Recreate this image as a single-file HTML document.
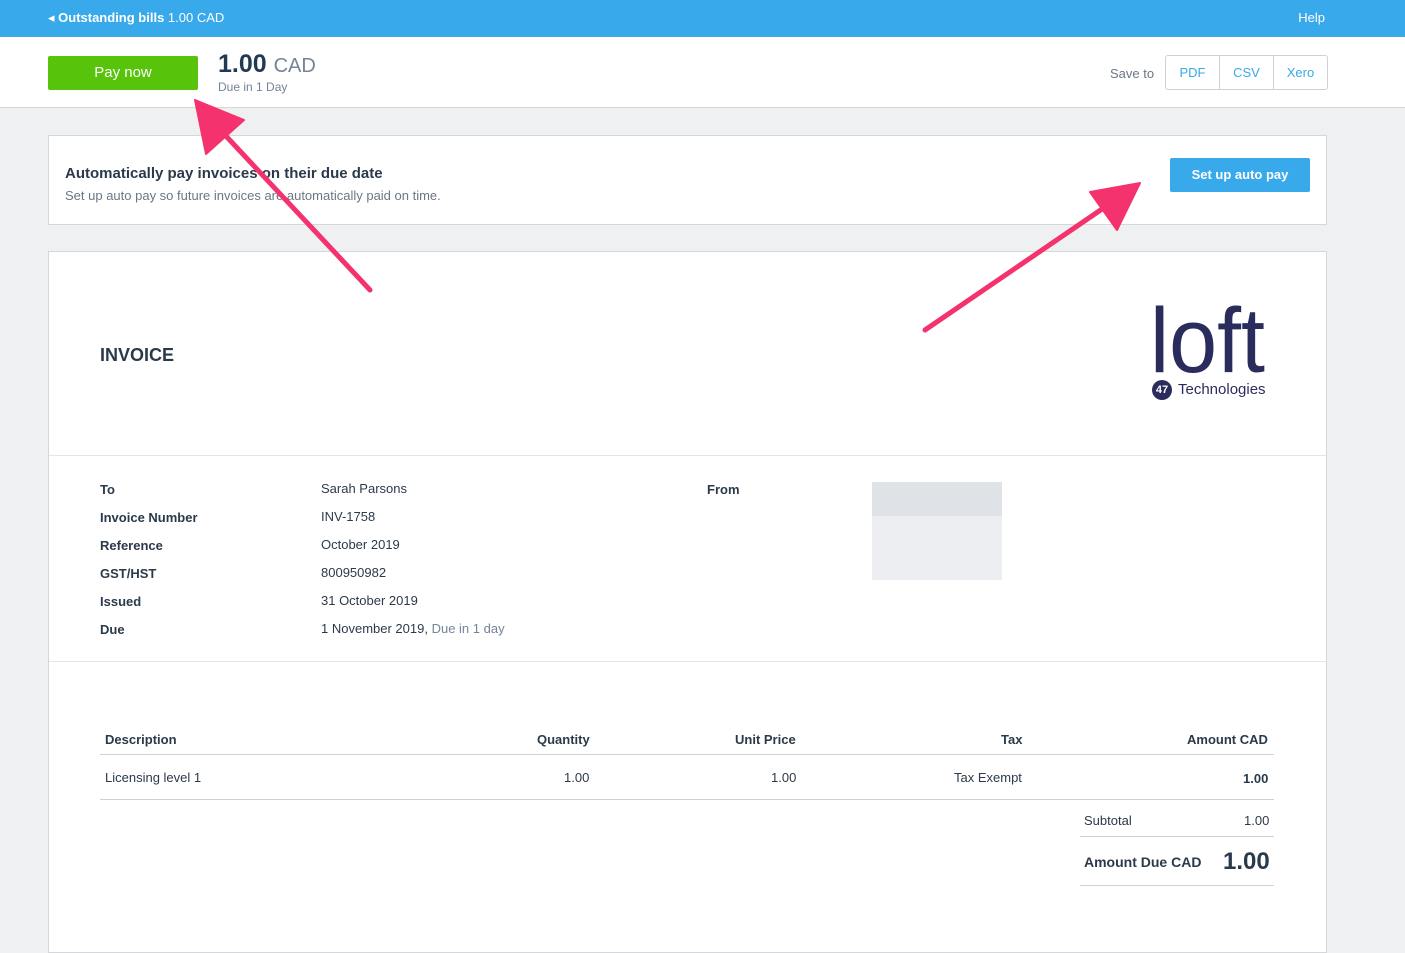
<!DOCTYPE html><html><head><style>
body{margin:0;width:1405px;height:888px;overflow:hidden;background:#eff0f2;font-family:"Liberation Sans",sans-serif;color:#2b3a4a;position:relative}
.top{height:37px;background:#38a9ea;color:#fff;font-size:13px;position:relative}
.top .l{position:absolute;left:48px;top:10px}
.top .r{position:absolute;right:80px;top:10px}
.hd{height:70px;background:#fff;border-bottom:1px solid #d4d8dc;position:relative}
.pay{position:absolute;left:48px;top:19px;width:150px;height:34px;background:#57c30a;border-radius:2px;color:#fff;font-size:15px;text-align:center;line-height:34px}
.amt{position:absolute;left:218px;top:13px;font-size:25px;font-weight:bold;color:#233a55}
.amt span{font-weight:normal;color:#74849a;font-size:20px}
.due{position:absolute;left:218px;top:43px;font-size:12px;color:#74849a}
.save{position:absolute;left:1110px;top:29px;font-size:13px;color:#6b7785}
.btns{position:absolute;left:1165px;top:18px;display:flex;border:1px solid #ccd2d8;border-radius:3px;height:33px}
.btns div{width:53px;text-align:center;line-height:33px;font-size:13px;color:#38a9ea;border-right:1px solid #ccd2d8}
.btns div:last-child{border:none}
.box{position:absolute;left:48px;width:1277px;background:#fff;border:1px solid #d4d8dc}
.ap{top:135px;height:88px}
.ap b{position:absolute;left:16px;top:29px;font-size:15px}
.ap p{position:absolute;left:16px;top:52px;margin:0;font-size:13px;color:#6b7785}
.ap .btn{position:absolute;left:1121px;top:22px;width:140px;height:34px;background:#38a9ea;color:#fff;border-radius:2px;font-size:13px;font-weight:bold;text-align:center;line-height:34px}
.inv{top:251px;height:700px}
.t{position:absolute;font-size:13px}
.b{font-weight:bold}
.hr{position:absolute;left:0;right:0;height:1px;background:#e3e6e9}
</style></head><body>
<div class="top"><div class="l">&#9666; <b>Outstanding bills</b> 1.00 CAD</div><div class="r">Help</div></div>
<div class="hd"><div class="pay">Pay now</div><div class="amt">1.00 <span>CAD</span></div><div class="due">Due in 1 Day</div>
<div class="save">Save to</div><div class="btns"><div>PDF</div><div>CSV</div><div>Xero</div></div></div>
<div class="box ap"><b>Automatically pay invoices on their due date</b><p>Set up auto pay so future invoices are automatically paid on time.</p><div class="btn">Set up auto pay</div></div>
<div class="box inv">
<div class="t b" style="left:51px;top:93px;font-size:18px">INVOICE</div>
<svg class="t" style="left:1095px;top:40px" width="140" height="90"><text x="6" y="80" font-family="Liberation Sans" font-size="92" fill="#fff" stroke="#2a2d5c" stroke-width="0" style="fill:#2a2d5c" textLength="115" lengthAdjust="spacingAndGlyphs" transform="scale(1,1)">loft</text></svg>
<div class="t" style="left:1103px;top:128px;width:20px;height:20px;border-radius:50%;background:#2a2d5c;color:#fff;font-size:11px;text-align:center;line-height:20px;font-weight:bold">47</div>
<div class="t" style="left:1129px;top:129px;font-size:15px;color:#2a2d5c">Technologies</div>
<div class="hr" style="top:203px"></div>
<div class="t b" style="left:51px;top:230px">To</div><div class="t" style="left:272px;top:229px">Sarah Parsons</div>
<div class="t b" style="left:51px;top:258px">Invoice Number</div><div class="t" style="left:272px;top:257px">INV-1758</div>
<div class="t b" style="left:51px;top:286px">Reference</div><div class="t" style="left:272px;top:285px">October 2019</div>
<div class="t b" style="left:51px;top:314px">GST/HST</div><div class="t" style="left:272px;top:313px">800950982</div>
<div class="t b" style="left:51px;top:342px">Issued</div><div class="t" style="left:272px;top:341px">31 October 2019</div>
<div class="t b" style="left:51px;top:370px">Due</div><div class="t" style="left:272px;top:369px">1 November 2019, <span style="color:#74849a">Due in 1 day</span></div>
<div class="t b" style="left:658px;top:230px">From</div>
<div class="t" style="left:823px;top:230px;width:130px;height:98px;background:#eceef1"></div>
<div class="t" style="left:823px;top:230px;width:130px;height:34px;background:#dfe2e7"></div>
<div class="hr" style="top:409px"></div>
<div class="t b" style="left:56px;top:480px">Description</div><div class="t b" style="left:488px;top:480px">Quantity</div><div class="t b" style="left:686px;top:480px">Unit Price</div><div class="t b" style="left:952px;top:480px">Tax</div><div class="t b" style="left:1138px;top:480px">Amount CAD</div>
<div class="t" style="left:51px;top:502px;width:1174px;height:1px;background:#ccd2d8"></div>
<div class="t" style="left:56px;top:518px">Licensing level 1</div><div class="t" style="left:515px;top:518px">1.00</div><div class="t" style="left:722px;top:518px">1.00</div><div class="t" style="left:905px;top:518px">Tax Exempt</div><div class="t b" style="left:1194px;top:519px">1.00</div>
<div class="t" style="left:51px;top:547px;width:1174px;height:1px;background:#ccd2d8"></div>
<div class="t" style="left:1035px;top:561px">Subtotal</div><div class="t" style="left:1195px;top:561px">1.00</div>
<div class="t" style="left:1031px;top:584px;width:194px;height:1px;background:#ccd2d8"></div>
<div class="t b" style="left:1035px;top:602px;font-size:14px">Amount Due CAD</div><div class="t b" style="left:1174px;top:596px;font-size:24px">1.00</div>
<div class="t" style="left:1031px;top:633px;width:194px;height:1px;background:#ccd2d8"></div>
</div>
<svg style="position:absolute;left:0;top:0" width="1405" height="888">
<g fill="#f4336e" stroke="#f4336e" stroke-linecap="round" stroke-linejoin="round">
<line x1="370" y1="290" x2="225" y2="135" stroke-width="5"/>
<polygon points="195,100 244,120 206,154" stroke-width="2"/>
<line x1="925" y1="330" x2="1105" y2="207" stroke-width="5"/>
<polygon points="1140,183 1117,230 1090,192" stroke-width="2"/>
</g></svg>
</body></html>
